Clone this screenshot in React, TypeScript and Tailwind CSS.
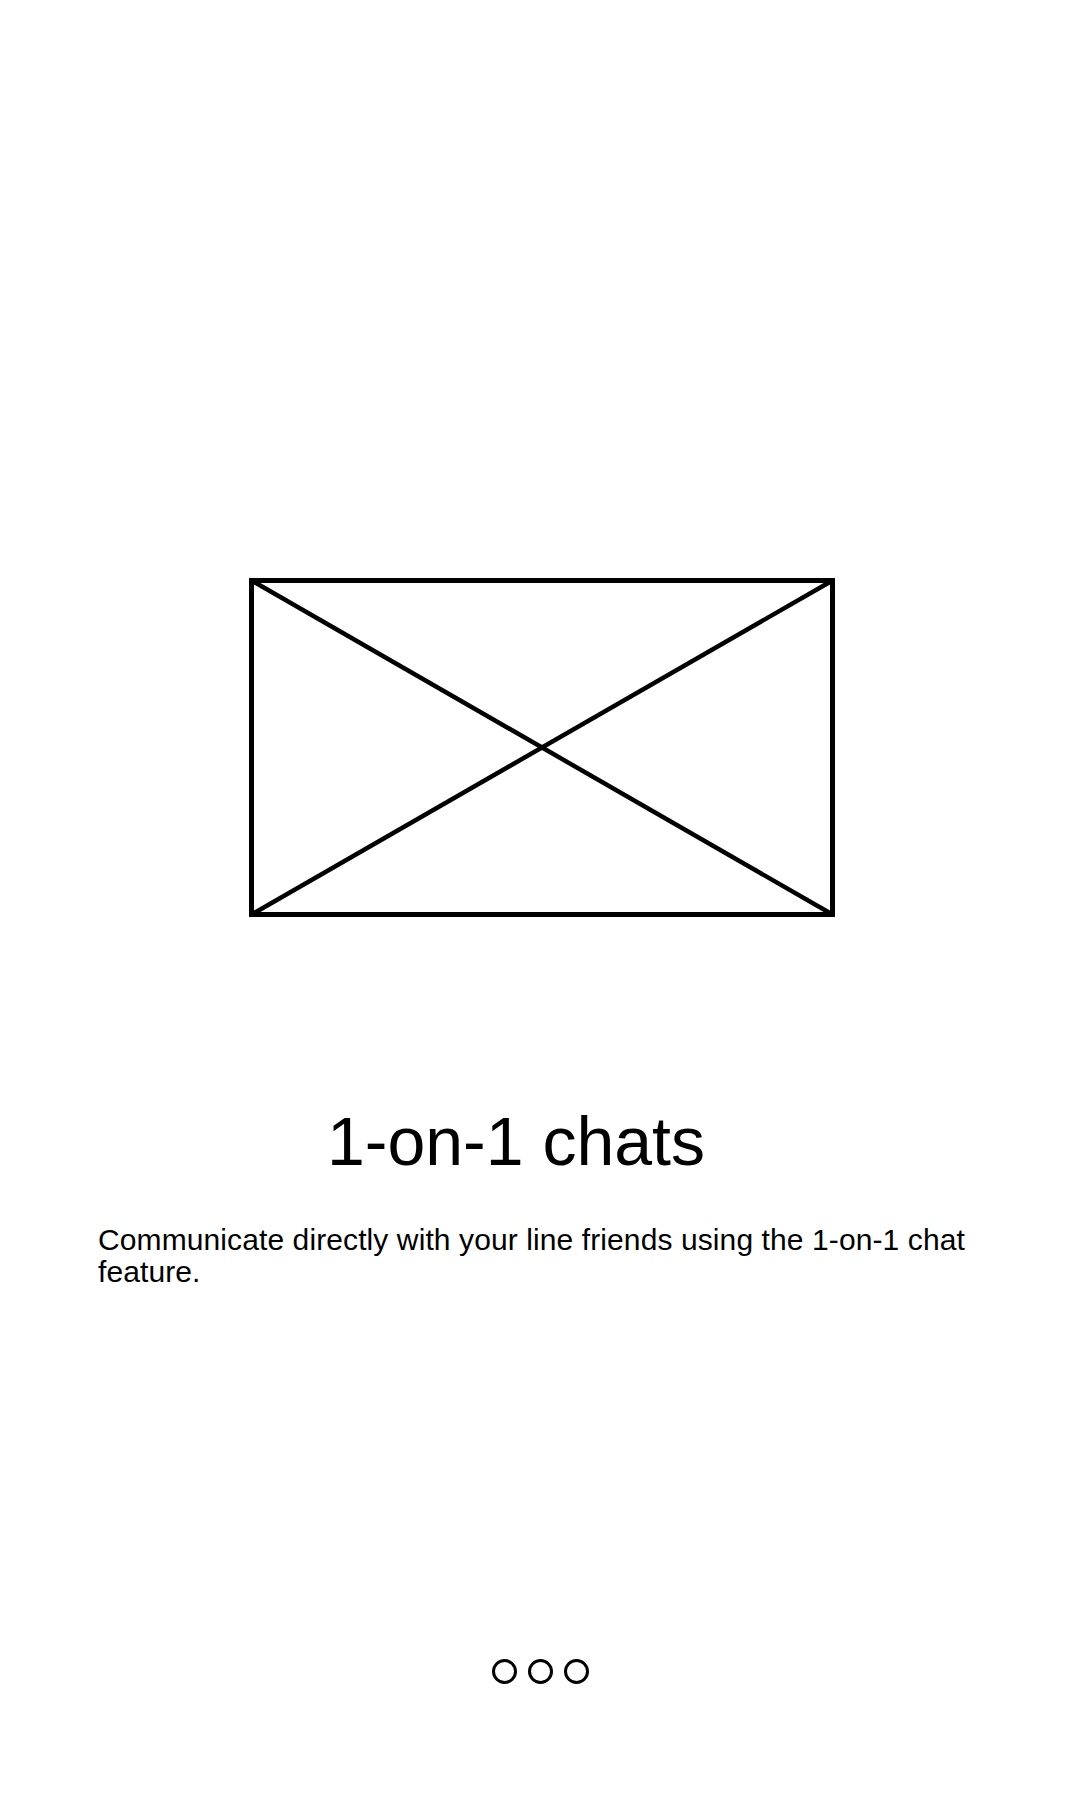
export default function App() {
  return (
    <div className="w-[1080px] h-[1800px] bg-white flex flex-col items-center text-black font-['Liberation_Sans',Arial,sans-serif]">
      <div className="mt-[578px] ml-[4px] w-[586px] h-[339px]">
        <svg width="586" height="339" viewBox="0 0 586 339">
          <rect x="2.5" y="2.5" width="581" height="334" fill="none" stroke="#000" strokeWidth="5" />
          <line x1="2.5" y1="2.5" x2="583.5" y2="336.5" stroke="#000" strokeWidth="4.5" />
          <line x1="583.5" y1="2.5" x2="2.5" y2="336.5" stroke="#000" strokeWidth="4.5" />
        </svg>
      </div>

      <h1 className="mt-[189px] mr-[48px] text-[68px] leading-[70px] font-normal">1-on-1 chats</h1>

      <p className="mt-[48px] self-stretch px-[98px] text-[30px] leading-[32px] tracking-[0.1px]">
        Communicate directly with your line friends using the 1-on-1 chat feature.
      </p>

      <div className="mt-auto mb-[116px] flex gap-[11px]">
        {[0, 1, 2].map((i) => (
          <span key={i} className="w-[25px] h-[25px] rounded-full border-[3px] border-black" />
        ))}
      </div>
    </div>
  );
}
